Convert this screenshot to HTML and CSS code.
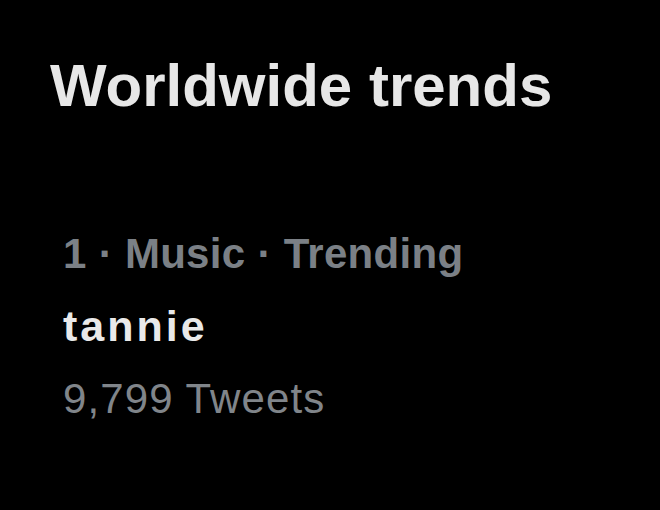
FILE: index.html
```html
<!DOCTYPE html>
<html lang="en">
<head>
    <meta charset="UTF-8">
    <meta name="viewport" content="width=device-width, initial-scale=1.0">
    <title>Worldwide trends</title>
    <link rel="stylesheet" href="styles.css">
</head>
<body>
    <div class="panel">
        <h2 class="title">Worldwide trends</h2>

        <div class="trend">
            <div class="trend-meta">1 · Music · Trending</div>
            <div class="trend-name">tannie</div>
            <div class="trend-count">9,799 Tweets</div>
        </div>
    </div>
</body>
</html>
```

FILE: styles.css
```css
body {
    background: #000000;
    margin: 0;
    font-family: "Liberation Sans", Arial, sans-serif;
}
.panel {
    padding: 50px 0 0 50px;
}
.title {
    margin: 0;
    font-size: 60px;
    line-height: 72px;
    font-weight: bold;
    color: #e7e7e7;
}
.trend {
    margin-top: 104px;
    padding-left: 13px;
}
.trend-meta {
    font-size: 42px;
    line-height: 56px;
    font-weight: bold;
    letter-spacing: 0.3px;
    color: #7b8086;
}
.trend-name {
    margin-top: 14px;
    font-size: 43px;
    line-height: 60px;
    font-weight: bold;
    letter-spacing: 3px;
    color: #e9e9e9;
}
.trend-count {
    margin-top: 13px;
    font-size: 42px;
    line-height: 60px;
    letter-spacing: 1.1px;
    color: #80858a;
}
```
